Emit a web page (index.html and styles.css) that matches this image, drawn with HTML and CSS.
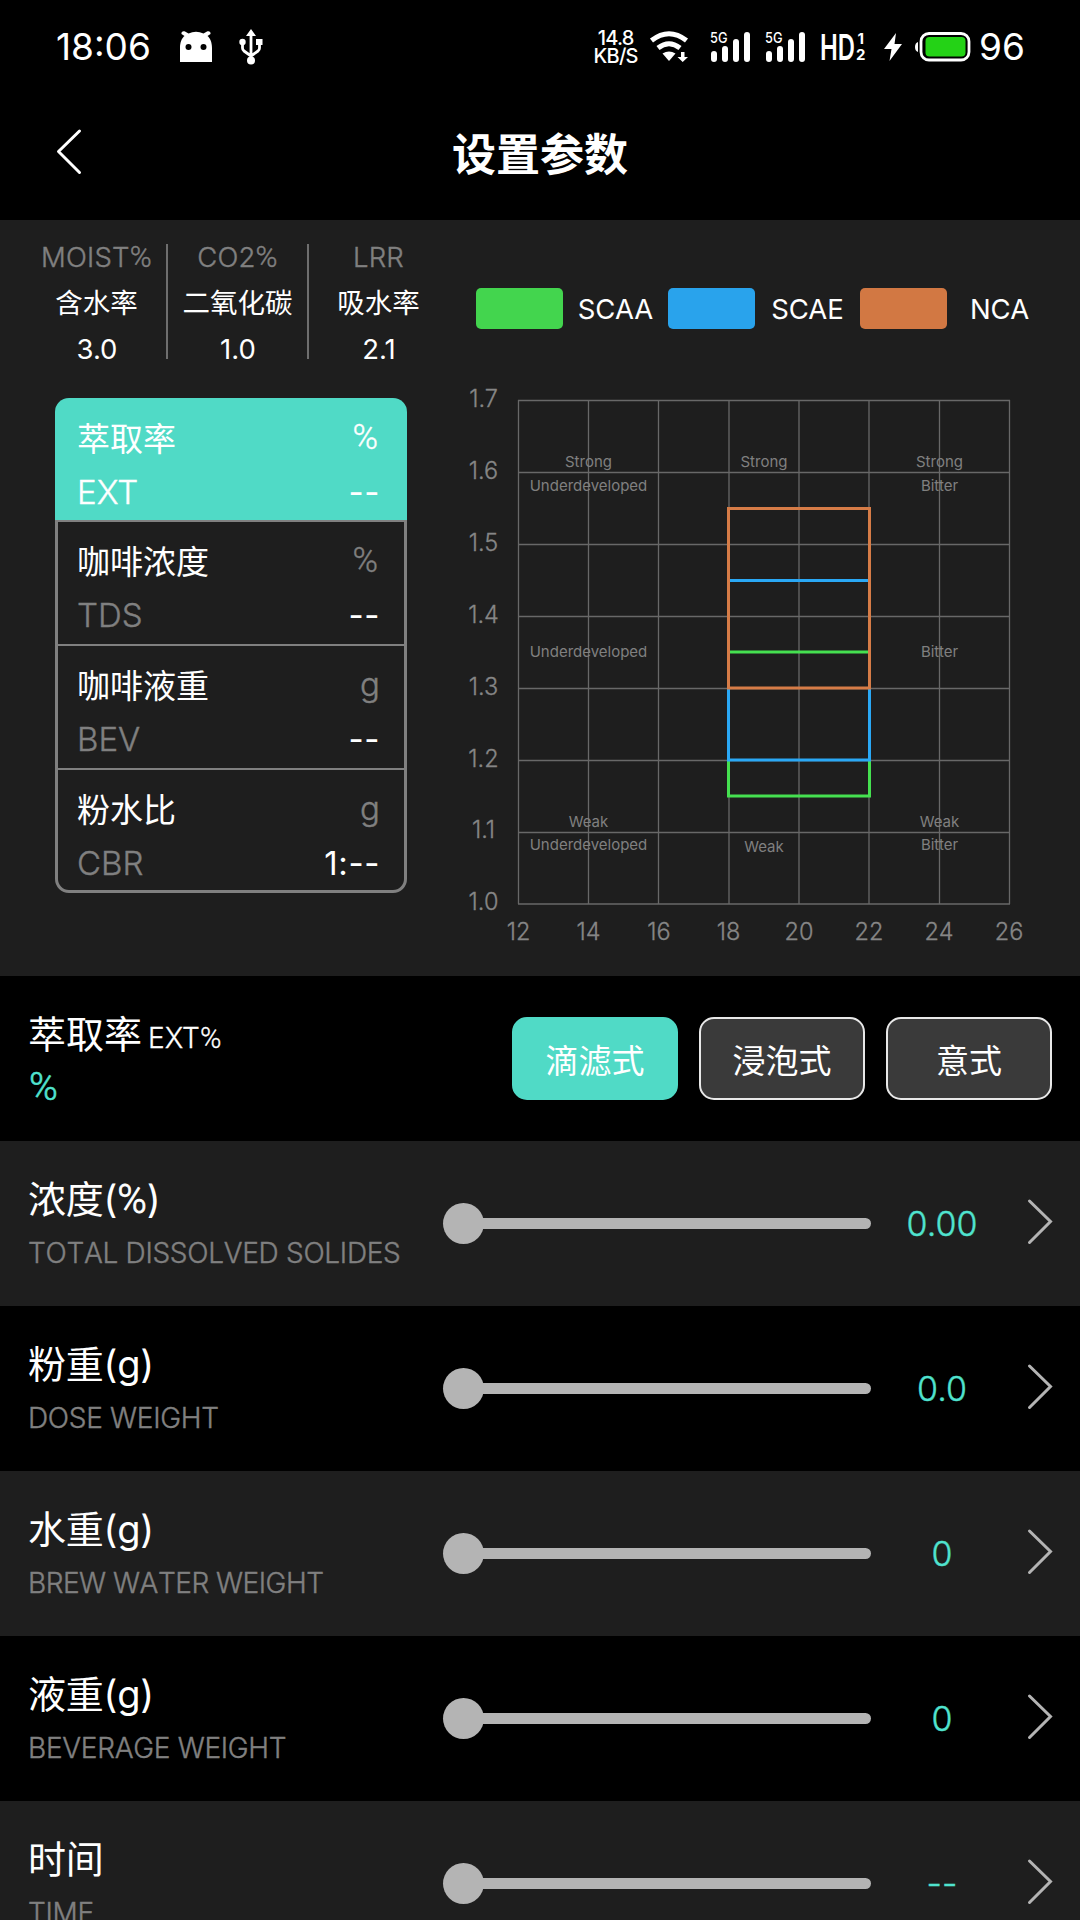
FILE: index.html
```html
<!DOCTYPE html>
<html lang="zh-CN">
<head>
<meta charset="utf-8">
<title>设置参数</title>
<link rel="stylesheet" href="styles.css">
</head>
<body>
<header class="top">
  <div class="status">
    <div class="status-left">
      <span class="clock">18:06</span>
      <svg class="droid" width="32" height="32" viewBox="0 0 32 32"><path fill="#fff" d="M0 31V17C0 11 2 7 4.500 5L1.500 3C1 1 3-.5 5 .5L8.500 2.500Q16-1 23.500 2.500L27 .5C29-.5 31 1 30.500 3L27.500 5C30 7 32 11 32 17V31Z"/><circle cx="8.500" cy="16" r="3"/><circle cx="23.500" cy="16" r="3"/></svg>
      <svg class="usb" width="24" height="36" viewBox="0 0 24 36"><g fill="none" stroke="#fff" stroke-width="2.800"><path d="M12 4V31M3.500 13V19Q3.500 21 5 22L12 27M20.500 13V19Q20.500 21 19 22L12 27"/></g><path fill="#fff" d="M12 0L17 7H7ZM17 10H23.500V16H17Z"/><circle cx="3.500" cy="13" r="3.200" fill="#fff"/><circle cx="12" cy="31.500" r="4" fill="#fff"/></svg>
    </div>
    <div class="status-right">
      <div class="speed"><span>14.8</span><span>KB/S</span></div>
      <svg class="wifi" width="40" height="32" viewBox="0 0 40 32"><g fill="none" stroke="#fff" stroke-width="5"><path d="M1.500 9.500Q19 -4 36.500 9.500"/><path d="M8 17Q19 8.500 30 17"/></g><path fill="#fff" d="M12.500 22.500Q19 18.500 25.500 22.500L19 30Z"/><path fill="#fff" d="M31 21H34.500V26H38L32.700 31L27.500 26H31Z"/></svg>
      <svg class="signal" width="40" height="30" viewBox="0 0 40 30"><g fill="#fff"><rect x="1" y="19" width="6" height="11" rx="3"/><rect x="12" y="14" width="6" height="16" rx="3"/><rect x="23" y="7" width="6" height="23" rx="3"/><rect x="34" y="0" width="6" height="30" rx="3"/></g><text x="0" y="11" class="net" textLength="17.500" lengthAdjust="spacingAndGlyphs">5G</text></svg>
      <svg class="signal second" width="40" height="30" viewBox="0 0 40 30"><g fill="#fff"><rect x="1" y="19" width="6" height="11" rx="3"/><rect x="12" y="14" width="6" height="16" rx="3"/><rect x="23" y="7" width="6" height="23" rx="3"/><rect x="34" y="0" width="6" height="30" rx="3"/></g><text x="0" y="11" class="net" textLength="17.500" lengthAdjust="spacingAndGlyphs">5G</text></svg>
      <svg class="hd" width="46" height="30" viewBox="0 0 46 30"><text x="-1" y="27.500" class="hd-text" textLength="35" lengthAdjust="spacingAndGlyphs">HD</text><text x="36.500" y="12" class="hd-num">1</text><text x="35" y="27.500" class="hd-num">2</text></svg>
      <svg class="bolt" width="18" height="28" viewBox="0 0 18 28"><path fill="#fff" d="M12 0L0 16H7.500L5.500 28L18 11H10.500Z"/></svg>
      <svg class="battery" width="56" height="30" viewBox="0 0 56 30"><path fill="#fff" d="M3 10V20Q0 19 0 15T3 10Z"/><rect x="6" y="1.500" width="48" height="26.500" rx="8" fill="none" stroke="#fff" stroke-width="2.800"/><rect x="10.500" y="5" width="40" height="19.500" rx="4" fill="#24d216"/></svg>
      <span class="level">96</span>
    </div>
  </div>
  <div class="navbar">
    <svg class="back" width="26" height="46" viewBox="0 0 26 46"><path d="M24.500 2L3.500 22.500L24.500 43.500" fill="none" stroke="#fff" stroke-width="3" stroke-linecap="round" stroke-linejoin="round"/></svg>
    <h1>设置参数</h1>
  </div>
</header>

<section class="panel">
  <div class="left">
    <div class="stats">
      <div class="stat"><span class="code">MOIST<span class="pct">%</span></span><span>含水率</span><span class="num">3.0</span></div>
      <div class="stat"><span class="code">CO2<span class="pct">%</span></span><span>二氧化碳</span><span class="num">1.0</span></div>
      <div class="stat"><span class="code">LRR</span><span>吸水率</span><span class="num">2.1</span></div>
    </div>
    <div class="card">
      <div class="cell active"><div class="line"><span>萃取率</span><span class="dim pct">%</span></div><div class="line"><span class="dim">EXT</span><span class="val">--</span></div></div>
      <div class="cell"><div class="line"><span>咖啡浓度</span><span class="dim pct">%</span></div><div class="line"><span class="dim">TDS</span><span class="val">--</span></div></div>
      <div class="cell"><div class="line"><span>咖啡液重</span><span class="dim">g</span></div><div class="line"><span class="dim">BEV</span><span class="val">--</span></div></div>
      <div class="cell"><div class="line"><span>粉水比</span><span class="dim">g</span></div><div class="line"><span class="dim">CBR</span><span class="val">1:--</span></div></div>
    </div>
  </div>
  <div class="right">
    <div class="legend">
      <div class="key"><i class="scaa"></i><span>SCAA</span></div>
      <div class="key"><i class="scae"></i><span>SCAE</span></div>
      <div class="key"><i class="nca"></i><span>NCA</span></div>
    </div>
    <svg class="chart" width="600" height="590" viewBox="460 380 600 590">
      <path class="grid" d="M518.500 400V904M588.500 400V904M658.500 400V904M729 400V904M799 400V904M869 400V904M939.500 400V904M1009.500 400V904M518 400.500H1010M518 472.500H1010M518 544.500H1010M518 616.500H1010M518 688.500H1010M518 760.500H1010M518 832.500H1010M518 904H1010"/>
      <g class="axis">
        <text x="483.500" y="407">1.7</text><text x="483.500" y="479">1.6</text><text x="483.500" y="550.500">1.5</text><text x="483.500" y="622.500">1.4</text><text x="483.500" y="694.500">1.3</text><text x="483.500" y="766.500">1.2</text><text x="483.500" y="838">1.1</text><text x="483.500" y="910">1.0</text>
        <text x="518.500" y="940">12</text><text x="588.500" y="940">14</text><text x="659" y="940">16</text><text x="728.500" y="940">18</text><text x="799" y="940">20</text><text x="869" y="940">22</text><text x="939" y="940">24</text><text x="1009" y="940">26</text>
      </g>
      <g class="zone">
        <text x="588.500" y="467">Strong</text><text x="588.500" y="491">Underdeveloped</text>
        <text x="764" y="467">Strong</text>
        <text x="939.500" y="467">Strong</text><text x="939.500" y="491">Bitter</text>
        <text x="588.500" y="657">Underdeveloped</text><text x="939.500" y="657">Bitter</text>
        <text x="588.500" y="827">Weak</text><text x="588.500" y="850">Underdeveloped</text>
        <text x="764" y="851.500">Weak</text>
        <text x="939.500" y="827">Weak</text><text x="939.500" y="850">Bitter</text>
      </g>
      <g fill="none" stroke-width="3">
        <rect x="728.500" y="652" width="141" height="144" stroke="#45e050"/>
        <rect x="728.500" y="580.500" width="141" height="179.500" stroke="#2aa8f5"/>
        <rect x="728.500" y="508.500" width="141" height="179.500" stroke="#d67c47"/>
      </g>
    </svg>
  </div>
</section>

<section class="method">
  <div class="method-info">
    <div class="method-title">萃取率<small>EXT<span class="pct">%</span></small></div>
    <div class="method-value pct">%</div>
  </div>
  <div class="choices">
    <button class="choice selected">滴滤式</button>
    <button class="choice">浸泡式</button>
    <button class="choice">意式</button>
  </div>
</section>

<main class="rows">
  <div class="row"><div class="name"><b>浓度(<span class="pct">%</span>)</b><span class="sub">TOTAL DISSOLVED SOLIDES</span></div><div class="slider"><i></i></div><span class="reading">0.00</span><svg class="go" width="26" height="46" viewBox="0 0 26 46"><path d="M2.500 2L23.500 22.500L2.500 43.500"/></svg></div>
  <div class="row"><div class="name"><b>粉重(g)</b><span class="sub">DOSE WEIGHT</span></div><div class="slider"><i></i></div><span class="reading">0.0</span><svg class="go" width="26" height="46" viewBox="0 0 26 46"><path d="M2.500 2L23.500 22.500L2.500 43.500"/></svg></div>
  <div class="row"><div class="name"><b>水重(g)</b><span class="sub tight">BREW WATER WEIGHT</span></div><div class="slider"><i></i></div><span class="reading">0</span><svg class="go" width="26" height="46" viewBox="0 0 26 46"><path d="M2.500 2L23.500 22.500L2.500 43.500"/></svg></div>
  <div class="row"><div class="name"><b>液重(g)</b><span class="sub">BEVERAGE WEIGHT</span></div><div class="slider"><i></i></div><span class="reading">0</span><svg class="go" width="26" height="46" viewBox="0 0 26 46"><path d="M2.500 2L23.500 22.500L2.500 43.500"/></svg></div>
  <div class="row"><div class="name"><b>时间</b><span class="sub">TIME</span></div><div class="slider"><i></i></div><span class="reading">--</span><svg class="go" width="26" height="46" viewBox="0 0 26 46"><path d="M2.500 2L23.500 22.500L2.500 43.500"/></svg></div>
</main>
</body>
</html>
```
FILE: styles.css
```css
* { box-sizing: border-box; }
html, body { margin: 0; height: 1920px; overflow: hidden; background: #000; }
body { width: 1080px; color: #fff; font-family: Inter, "Noto Sans CJK SC", sans-serif; }
svg { display: block; flex: none; overflow: visible; }
.pct { font-family: Roboto, sans-serif; font-size: 1.08em; font-weight: 300; }

.top { height: 220px; background: #000; }
.status { height: 92px; padding: 1px 55px 0 56px; display: flex; justify-content: space-between; }
.status-left, .status-right { display: flex; align-items: center; height: 92px; }
.clock { width: 124px; font-size: 37px; line-height: 44px; font-weight: 400; }
.usb { margin-left: 27px; }
.speed { display: flex; flex-direction: column; align-items: center; width: 43px; font-size: 20px; line-height: 18px; font-weight: 500; letter-spacing: -0.8px; }
.wifi { margin-left: 13px; }
.signal { margin-left: 20px; }
.signal.second { margin-left: 15px; }
.net { font-size: 15px; font-weight: 500; fill: #fff; }
.hd { margin-left: 16px; }
.hd-text { font-size: 36px; font-weight: 600; fill: #fff; }
.hd-num { font-size: 15px; font-weight: 700; fill: #fff; }
.bolt { margin-left: 17px; }
.battery { margin-left: 13px; }
.level { margin-left: 8px; font-size: 37px; line-height: 44px; font-weight: 400; }

.navbar { height: 128px; padding: 0 55px; display: grid; grid-template-columns: 60px 1fr 60px; align-items: center; }
.back { margin-bottom: 8px; }
h1 { margin: 0 0 3px; text-align: center; font-size: 44px; line-height: 60px; font-weight: 700; }

.panel { height: 756px; background: #1e1e1e; display: flex; }
.left { width: 460px; padding-top: 24px; }
.stats { display: flex; margin-left: 27px; height: 115px; }
.stat { width: 141px; height: 115px; display: flex; flex-direction: column; align-items: center; font-size: 27.500px; border-right: 2px solid #6e6e6e; }
.stat:last-child { border-right: 0; width: 139px; }
.stat > span { flex: none; height: 46px; line-height: 46px; }
.stat > span:first-child { margin-top: -10px; }
.num { padding-left: 1px; }
.code { color: #808080; font-weight: 300; letter-spacing: 0.2px; -webkit-text-stroke: 0.4px #808080; }

.card { margin: 39px 0 0 55px; width: 352px; height: 495px; display: grid; grid-template-rows: 122px 124px 124px 125px; }
.cell { padding: 13px 24px 0 19px; border: 3px solid #808080; border-width: 2px 3px 0; font-size: 33px; }
.cell:last-child { border-bottom-width: 3px; border-radius: 0 0 14px 14px; }
.cell.active { background: #50dac6; border-color: #50dac6; border-radius: 14px 14px 0 0; padding-top: 12px; }
.line { display: flex; justify-content: space-between; height: 54px; line-height: 54px; white-space: nowrap; }
.line:last-child { line-height: 53px; }
.dim { color: #808080; font-weight: 300; -webkit-text-stroke: 0.4px; }
.line:first-child .dim { line-height: 51px; }
.dim.pct { font-size: 34.500px; margin-right: 2px; }
.val { letter-spacing: 0.6px; }
.active .dim { color: #fff; }

.right { width: 620px; }
.legend { display: flex; margin: 68px 0 0 16px; height: 41px; }
.key { width: 192px; display: flex; align-items: center; font-size: 27.500px; }
.key i { width: 87px; height: 41px; border-radius: 5px; }
.key span { width: 105px; padding-top: 1px; text-align: center; }
.scaa { background: #43d54e; }
.scae { background: #29a3ec; }
.nca { background: #d27843; }
.chart { margin-top: 51px; }
.grid { fill: none; stroke: #686868; stroke-width: 1.300; }
.axis text { font-size: 23.500px; font-weight: 300; fill: #868686; stroke: #868686; stroke-width: 0.3px; text-anchor: middle; }
.zone text { font-size: 15px; font-weight: 400; fill: #808080; text-anchor: middle; }

.method { height: 165px; padding: 0 28px; display: flex; justify-content: space-between; }
.method-info { padding-top: 31px; }
.method-title { font-size: 38px; line-height: 54px; height: 54px; }
.method-title small { font-size: 28px; font-weight: 300; margin-left: 6px; -webkit-text-stroke: 0.3px #fff; }
.method-title .pct { font-size: 29px; }
.method-value { font-size: 39px; line-height: 52px; color: #50e3cf; padding-left: 1px; -webkit-text-stroke: 0.6px #50e3cf; }
.choices { display: flex; gap: 21px; padding-top: 41px; }
.choice { width: 166px; height: 83px; padding: 0; border: 2px solid #e8e8e8; border-radius: 15px; background: #3a3a3a; color: #fff; font: 33px Inter, "Noto Sans CJK SC", sans-serif; }
.choice.selected { background: #50dac6; border-color: #50dac6; }

.row { height: 165px; padding: 0 27px 0 28px; display: grid; grid-template-columns: 415px 428px 142px 1fr; align-items: center; background: #000; }
.row:nth-child(odd) { background: #1e1e1e; }
.name { display: flex; flex-direction: column; height: 165px; padding-top: 31px; }
.name b { font-size: 38px; line-height: 54px; height: 54px; font-weight: 400; letter-spacing: -0.2px; }
.name .pct { font-size: 40px; -webkit-text-stroke: 0.8px #fff; }
.sub { font-size: 28px; line-height: 54px; font-weight: 300; letter-spacing: -0.3px; font-kerning: none; color: #808080; white-space: nowrap; -webkit-text-stroke: 0.4px #808080; }
.sub.tight { letter-spacing: -0.5px; }
.slider { height: 42px; display: flex; align-items: center; }
.slider i { width: 41px; height: 41px; border-radius: 50%; background: #b4b4b4; }
.slider::after { content: ""; width: 388px; height: 11px; margin-left: -1px; border-radius: 0 6px 6px 0; background: #b4b4b4; }
.reading { text-align: center; font-size: 34px; font-weight: 300; color: #50e3cf; -webkit-text-stroke: 0.4px #50e3cf; }
.go { justify-self: end; margin-bottom: 3px; fill: none; stroke: #b4b4b4; stroke-width: 3; stroke-linecap: round; }
```
